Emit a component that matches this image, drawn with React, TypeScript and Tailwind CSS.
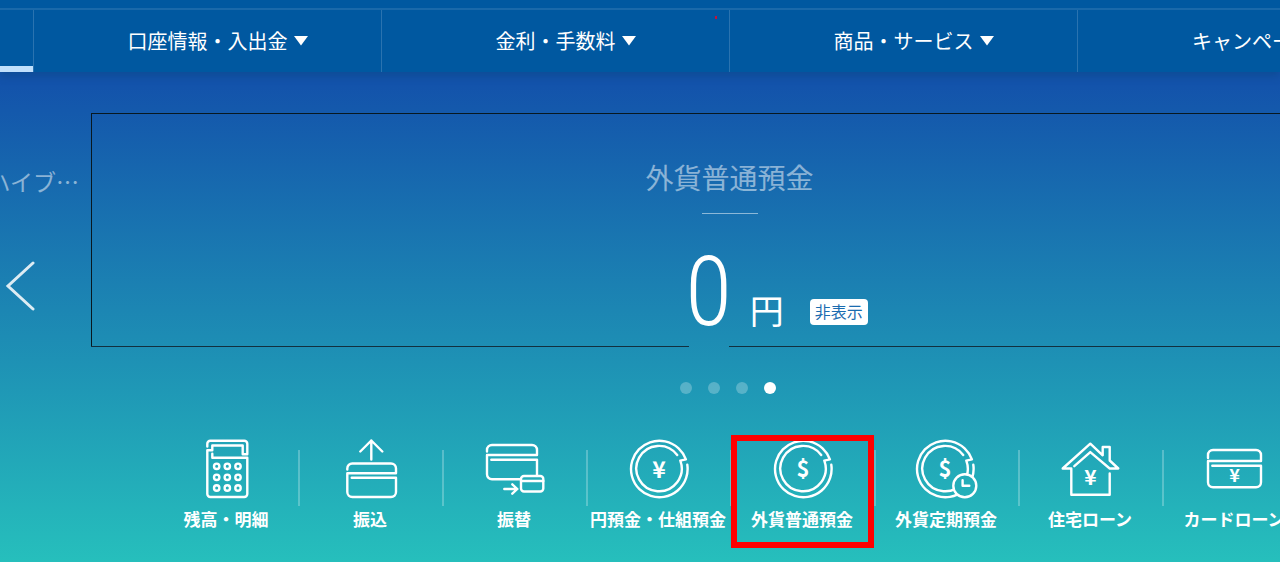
import React from 'react';

interface NavItem {
  label: string;
  hasMenu: boolean;
}

interface QuickLink {
  label: string;
  icon: React.ReactNode;
  selected?: boolean;
}

const navItems: NavItem[] = [
  { label: '口座情報・入出金', hasMenu: true },
  { label: '金利・手数料', hasMenu: true },
  { label: '商品・サービス', hasMenu: true },
  { label: 'キャンペーン', hasMenu: false },
];

const IconBase: React.FC<{ width?: number; children: React.ReactNode }> = ({ width = 60, children }) => (
  <svg
    width={width}
    height={60}
    viewBox={`0 0 ${width} 60`}
    fill="none"
    stroke="currentColor"
    strokeWidth={2.4}
    strokeLinecap="round"
    strokeLinejoin="round"
    aria-hidden="true"
  >
    {children}
  </svg>
);

const Currency: React.FC<{ sign: string; x: number; y: number; size: number }> = ({ sign, x, y, size }) => (
  <text
    x={x}
    y={y}
    fontSize={size}
    textAnchor="middle"
    fill="currentColor"
    stroke="none"
    className="font-['Noto_Sans_CJK_JP',sans-serif] font-bold"
  >
    {sign}
  </text>
);

const CalculatorIcon = () => (
  <IconBase>
    <path d="M10.3 7.5V4.7a3 3 0 0 1 3-3h34a3 3 0 0 1 3 3v10.6h-4.6V6.5H15.3v4.8h-5V55a3 3 0 0 0 3 3h34a3 3 0 0 0 3-3V18.7h-35v-4" />
    {[27.3, 38.3, 49].map((cy) =>
      [19.7, 30.3, 41].map((cx) => <circle key={`${cx}-${cy}`} cx={cx} cy={cy} r={2.7} />)
    )}
  </IconBase>
);

const TransferIcon = () => (
  <IconBase>
    <path d="M30.3 20.5V1.5M19.3 12.5l11-11 11 11" />
    <path d="M6.3 30.5v-1a5 5 0 0 1 5-5H50a5 5 0 0 1 5 5v4.8H6.3V53a5 5 0 0 0 5 5H50a5 5 0 0 0 5-5V38.7H10.7" />
  </IconBase>
);

const ExchangeIcon = () => (
  <IconBase>
    <path d="M2 12.5V11a5 5 0 0 1 5-5h40a5 5 0 0 1 5 5v5H2v19.3a5 5 0 0 0 5 5h28.5M52 36.5V20.7H6.3" />
    <rect x={36} y={37} width={22.3} height={15.5} rx={3} />
    <path d="M36 42h22.3M19.3 50h13M27.3 45.3l5 4.7-5 4.7" />
  </IconBase>
);

const coinPath =
  'M58.3 25.8A28.3 28.3 0 1 1 56.9 20.3L51.3 21.7A22.7 22.7 0 1 1 48.2 16';

const YenCoinIcon = () => (
  <IconBase>
    <path d={coinPath} />
    <Currency sign="¥" x={30} y={39} size={23} />
  </IconBase>
);

const DollarCoinIcon = () => (
  <IconBase>
    <path d={coinPath} />
    <Currency sign="$" x={30} y={38} size={22} />
  </IconBase>
);

const TimeDepositIcon = () => (
  <IconBase width={64}>
    <mask id="clock-cutout">
      <rect width={64} height={60} fill="white" stroke="none" />
      <circle cx={49.8} cy={46.7} r={11.7} fill="black" stroke="none" />
    </mask>
    <path d={coinPath} mask="url(#clock-cutout)" />
    <circle cx={49.8} cy={46.7} r={11.5} />
    <path d="M47.6 41.2v5.5h6.7" />
    <Currency sign="$" x={30} y={38} size={22} />
  </IconBase>
);

const HouseIcon = () => (
  <IconBase>
    <path d="M48.7 34.5v21.2H10.3V29.5H1.7L29.3 4.7l12.4 11.6V8h7v13.5l8.6 8h-8.6L29.3 13.1 13.3 27.2" />
    <Currency sign="¥" x={29.5} y={46} size={21} />
  </IconBase>
);

const CardLoanIcon = () => (
  <IconBase>
    <path d="M3 19v-3a5 5 0 0 1 5-5h43a5 5 0 0 1 5 5v6H3v21.3a5 5 0 0 0 5 5h43a5 5 0 0 0 5-5V26.7H7.3" />
    <Currency sign="¥" x={29.5} y={43} size={18} />
  </IconBase>
);

const quickLinks: QuickLink[] = [
  { label: '残高・明細', icon: <CalculatorIcon /> },
  { label: '振込', icon: <TransferIcon /> },
  { label: '振替', icon: <ExchangeIcon /> },
  { label: '円預金・仕組預金', icon: <YenCoinIcon /> },
  { label: '外貨普通預金', icon: <DollarCoinIcon />, selected: true },
  { label: '外貨定期預金', icon: <TimeDepositIcon /> },
  { label: '住宅ローン', icon: <HouseIcon /> },
  { label: 'カードローン', icon: <CardLoanIcon /> },
];

const GlobalNav = () => (
  <header className="relative bg-[#0058a0] pt-2 shadow-[0_4px_8px_rgba(0,60,100,0.3)]">
    <nav className="flex h-16 border-t-2 border-[#1a69aa]">
      <div className="flex w-[34px] shrink-0 items-end border-r border-[#2a73b0]">
        <div className="h-[6px] w-full bg-[#c0e0fc]" />
      </div>
      {navItems.map((item) => (
        <a
          key={item.label}
          href="#"
          className={`flex w-[348px] shrink-0 items-center justify-center gap-[6px] border-r border-[#2a73b0] text-xl text-white ${
            item.hasMenu ? 'pl-5' : ''
          }`}
        >
          {item.label}
          {item.hasMenu && (
            <svg width="14" height="10" viewBox="0 0 14 10" fill="currentColor" aria-hidden="true">
              <path d="M0 0h14L7 9.5z" />
            </svg>
          )}
        </a>
      ))}
    </nav>
    <span className="absolute left-[715px] top-4 h-[3px] w-[2px] bg-[#c0143c]" />
  </header>
);

const AccountSlider = () => (
  <section className="flex pt-[41px]">
    {/* Previous account */}
    <div className="flex w-[91px] shrink-0 flex-col">
      <div className="mt-[50px] flex justify-end overflow-hidden pr-3">
        <span className="shrink-0 text-[23px] leading-9 text-white/50">ハイブ…</span>
      </div>
      <button type="button" aria-label="前へ" className="ml-[5px] mt-[62px] w-8 text-white/85">
        <svg width="30" height="50" viewBox="0 0 30 50" fill="none" stroke="currentColor" strokeWidth="3">
          <path d="M28 2L3 25l25 23" strokeLinecap="round" />
        </svg>
      </button>
    </div>

    {/* Current account */}
    <div className="-mr-[87px] min-w-0 flex-1">
      <div className="flex h-[233px] flex-col items-center border-l border-t border-[#081820] pt-[45px]">
        <h2 className="text-[28px] leading-9 text-white/50">外貨普通預金</h2>
        <div className="mt-[18px] h-px w-14 bg-white/50" />
        <div className="mt-9 flex items-end pl-[94px] text-white">
          <span className="font-['Roboto_Condensed','Liberation_Sans_Narrow',sans-serif] text-[96px] font-[350] leading-[84px]">
            0
          </span>
          <span className="ml-[18px] pb-[2px] text-[34px] leading-[44px]">円</span>
          <button
            type="button"
            className="mb-[9px] ml-[26px] h-[26px] w-[58px] rounded bg-white pb-[2px] text-base leading-none text-[#1a6cb0]"
          >
            非表示
          </button>
        </div>
      </div>
      <div className="flex">
        <div className="w-1/2 pr-10">
          <div className="h-px bg-[#12303f]" />
        </div>
        <div className="h-px w-1/2 bg-[#12303f]" />
      </div>
      <div className="mt-[35px] flex justify-center gap-4 pr-[2px]">
        {[0, 1, 2, 3].map((index) => (
          <button
            key={index}
            type="button"
            aria-label={`${index + 1}`}
            className={`size-3 rounded-full ${index === 3 ? 'bg-white' : 'bg-white/25'}`}
          />
        ))}
      </div>
    </div>
  </section>
);

const QuickMenu = () => (
  <ul className="mt-[45px] flex pl-[155px]">
    {quickLinks.map((link) => (
      <li key={link.label} className="relative flex w-36 shrink-0">
        <a href="#" className="flex flex-1 flex-col items-center text-white">
          {link.icon}
          <span className="mt-2 whitespace-nowrap pr-[2px] text-[17px] font-bold leading-6">{link.label}</span>
        </a>
        <div className="-mx-px mt-[11px] h-14 w-[2px] bg-white/25" />
        {link.selected && (
          <div className="absolute -top-1 left-0 h-[113px] w-[143px] border-[6px] border-[#ff0000]" />
        )}
      </li>
    ))}
  </ul>
);

export default function App() {
  return (
    <div className="min-h-screen overflow-hidden bg-linear-to-b/srgb from-[#1353ab] from-15% to-[#26bfbc] font-['Noto_Sans_CJK_JP',sans-serif]">
      <GlobalNav />
      <main>
        <AccountSlider />
        <QuickMenu />
      </main>
    </div>
  );
}
